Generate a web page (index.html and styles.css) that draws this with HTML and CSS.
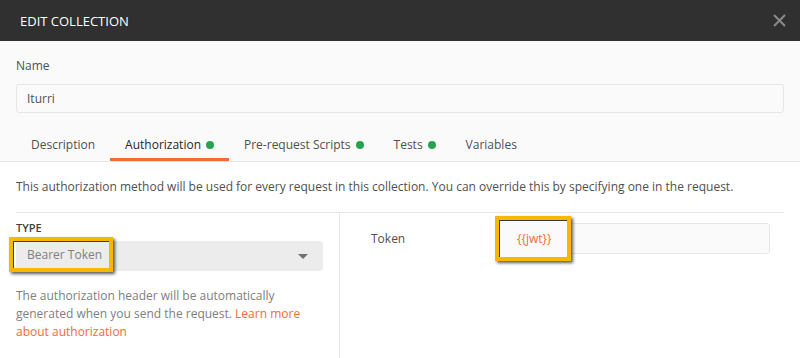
FILE: index.html
```html
<!DOCTYPE html>
<html lang="en">

<head>
    <meta charset="UTF-8">
    <meta name="viewport" content="width=device-width, initial-scale=1.0">
    <title>Edit Collection</title>
    <link rel="stylesheet" href="styles.css">
</head>

<body>
    <div class="modal">
        <div class="modal-header">
            <span class="modal-title">EDIT COLLECTION</span>
            <svg class="close" width="13" height="13" viewBox="0 0 13 13">
                <path d="M1 1 L12 12 M12 1 L1 12" stroke="#8a8a8a" stroke-width="2" fill="none"/>
            </svg>
        </div>

        <div class="modal-body">
            <div class="name-field">
                <label class="field-label">Name</label>
                <div class="text-input">Iturri</div>
            </div>

            <div class="tabs">
                <div class="tab">Description</div>
                <div class="tab active">Authorization <span class="dot"></span></div>
                <div class="tab">Pre-request Scripts <span class="dot"></span></div>
                <div class="tab">Tests <span class="dot"></span></div>
                <div class="tab">Variables</div>
            </div>

            <div class="auth-pane">
                <p class="auth-intro">This authorization method will be used for every request in this collection. You can override this by specifying one in the request.</p>

                <div class="auth-body">
                    <div class="auth-type">
                        <div class="type-label">TYPE</div>
                        <div class="select">
                            <span class="highlight select-value">Bearer Token</span>
                            <span class="caret"></span>
                        </div>
                        <div class="help">The authorization header will be automatically generated when you send the request. <a href="#">Learn more about authorization</a></div>
                    </div>
                    <div class="auth-fields">
                        <div class="field-row">
                            <span class="row-label">Token</span>
                            <div class="token-input">
                                <span class="highlight token-value">{{jwt}}</span>
                            </div>
                        </div>
                    </div>
                </div>
            </div>
        </div>
    </div>
</body>

</html>
```

FILE: styles.css
```css
body {
    margin: 0;
    font-family: "Open Sans", "Liberation Sans", sans-serif;
    background-color: #ffffff;
}

.modal {
    width: 800px;
    height: 358px;
    display: flex;
    flex-direction: column;
    overflow: hidden;
}

.modal-header {
    height: 41px;
    background-color: #303030;
    padding: 0 14px 0 20px;
    display: flex;
    justify-content: space-between;
    align-items: center;
    flex-shrink: 0;
}

.modal-title {
    color: #ffffff;
    font-size: 13px;
    font-weight: 400;
}

.modal-body {
    flex: 1;
    display: flex;
    flex-direction: column;
}

.name-field {
    background-color: #fafafa;
    padding: 15px 16px 0;
}

.field-label {
    display: block;
    font-size: 12px;
    color: #505050;
    line-height: 20px;
    margin-bottom: 8px;
}

.text-input {
    height: 27px;
    border: 1px solid #e6e6e6;
    border-radius: 3px;
    background-color: #fafafa;
    padding: 0 10px;
    font-size: 12px;
    line-height: 27px;
    color: #505050;
}

.tabs {
    background-color: #fafafa;
    display: flex;
    padding: 18px 16px 0;
    border-bottom: 1px solid #e6e6e6;
}

.tab {
    padding: 0 15px;
    height: 30px;
    line-height: 30px;
    font-size: 12px;
    color: #505050;
    display: flex;
    align-items: center;
    gap: 5px;
    border-bottom: 3px solid transparent;
    box-sizing: border-box;
}

.tab.active {
    color: #282828;
    border-bottom-color: #f26b3a;
}

.dot {
    width: 8px;
    height: 8px;
    border-radius: 50%;
    background-color: #26a34f;
}

.auth-pane {
    flex: 1;
    background-color: #ffffff;
    display: flex;
    flex-direction: column;
}

.auth-intro {
    margin: 0;
    padding: 16px 16px 0;
    font-size: 12px;
    line-height: 18px;
    color: #505050;
}

.auth-body {
    flex: 1;
    margin: 16px 16px 0;
    border-top: 1px solid #e6e6e6;
    display: flex;
}

.auth-type {
    width: 323px;
    flex-shrink: 0;
    border-right: 1px solid #e6e6e6;
    padding-top: 7px;
}

.type-label {
    font-size: 11px;
    font-weight: 600;
    color: #404040;
    line-height: 16px;
    margin-bottom: 5px;
}

.select {
    width: 307px;
    height: 30px;
    background-color: #ececec;
    border-radius: 3px;
    display: flex;
    align-items: center;
    justify-content: space-between;
    padding-right: 15px;
    box-sizing: border-box;
}

.highlight {
    border: 4px solid #f9b700;
    box-shadow: inset 1px 1px 0 #3a3a3a, 2px 2px 3px rgba(0, 0, 0, 0.65);
    box-sizing: border-box;
}

.select-value {
    margin-left: -7px;
    width: 104px;
    height: 35px;
    padding-left: 14px;
    display: flex;
    align-items: center;
    font-size: 12px;
    color: #808080;
    margin-top: -5px;
    margin-bottom: -1px;
}

.caret {
    width: 0;
    height: 0;
    border-left: 5px solid transparent;
    border-right: 5px solid transparent;
    border-top: 5px solid #707070;
}

.help {
    margin-top: 16px;
    font-size: 12px;
    line-height: 18px;
    color: #808080;
    padding-right: 10px;
}

.help a {
    color: #f26b3a;
    text-decoration: none;
}

.auth-fields {
    flex: 1;
    padding: 10px 14px 0 31px;
}

.field-row {
    display: flex;
    align-items: center;
}

.row-label {
    width: 135px;
    flex-shrink: 0;
    font-size: 12px;
    color: #505050;
}

.token-input {
    flex: 1;
    height: 31px;
    border: 1px solid #e6e6e6;
    border-radius: 3px;
    background-color: #fafafa;
    box-sizing: border-box;
    display: flex;
    align-items: flex-start;
}

.token-value {
    margin-left: -12px;
    margin-top: -8px;
    width: 76px;
    height: 45px;
    padding-left: 18px;
    display: flex;
    align-items: center;
    font-size: 12px;
    color: #f26b3a;
    background-color: #fafafa;
}
```
